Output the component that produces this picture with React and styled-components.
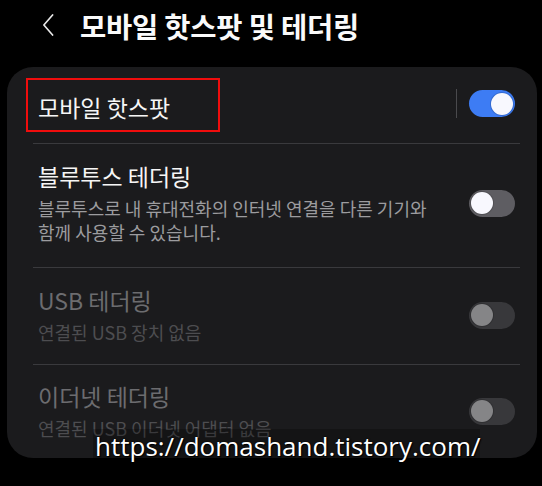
import React from "react";
import styled, { createGlobalStyle } from "styled-components";

const GlobalStyle = createGlobalStyle`
  html, body {
    margin: 0;
    padding: 0;
    background: #000;
  }
  body {
    width: 542px;
    height: 486px;
    overflow: hidden;
    font-family: "Noto Sans CJK KR", "Noto Sans", sans-serif;
  }
`;

const rows = [
  {
    title: "블루투스 테더링",
    desc: "블루투스로 내 휴대전화의 인터넷 연결을 다른 기기와 함께 사용할 수 있습니다.",
    pad: "18px 0 23px",
    state: "off",
  },
  {
    title: "USB 테더링",
    desc: "연결된 USB 장치 없음",
    pad: "18px 0 20px",
    state: "disabled",
  },
  {
    title: "이더넷 테더링",
    desc: "연결된 USB 이더넷 어댑터 없음",
    pad: "17px 0 18px",
    state: "disabled",
  },
];

const App = () => {
  return (
    <Page>
      <GlobalStyle />
      <Header>
        <BackIcon viewBox="0 0 12 24">
          <path d="M11 1 L1.5 12 L11 23" />
        </BackIcon>
        <Title>모바일 핫스팟 및 테더링</Title>
      </Header>
      <Card>
        <Row pad="0" height="76px">
          <TextCol>
            <MainLabel>모바일 핫스팟</MainLabel>
          </TextCol>
          <VDivider />
          <Toggle state="on" lift="3px">
            <Knob state="on" />
          </Toggle>
        </Row>
        <Divider />
        {rows.map((r, i) => (
          <React.Fragment key={r.title}>
            <Row pad={r.pad}>
              <TextCol>
                <RowTitle disabled={r.state === "disabled"}>{r.title}</RowTitle>
                <RowDesc disabled={r.state === "disabled"}>{r.desc}</RowDesc>
              </TextCol>
              <Toggle state={r.state}>
                <Knob state={r.state} />
              </Toggle>
            </Row>
            {i < rows.length - 1 && <Divider />}
          </React.Fragment>
        ))}
        <Highlight />
      </Card>
      <Watermark>https://domashand.tistory.com/</Watermark>
    </Page>
  );
};

const Page = styled.div`
  position: relative;
  width: 542px;
  height: 486px;
  background: #000;
  overflow: hidden;
`;

const Header = styled.div`
  display: flex;
  align-items: center;
  height: 48px;
  padding: 1px 0 1px 42px;
  gap: 26px;
`;

const BackIcon = styled.svg`
  width: 12px;
  height: 22px;
  fill: none;
  stroke: #e8e8e8;
  stroke-width: 1.8;
  stroke-linecap: round;
  stroke-linejoin: round;
`;

const Title = styled.h1`
  margin: 0;
  color: #fafafa;
  font-size: 28.5px;
  font-weight: 700;
  letter-spacing: -0.2px;
`;

const Card = styled.div`
  position: relative;
  margin: 17px 5px 0 7px;
  height: 391px;
  background: #1b1b1d;
  border-radius: 26px;
  overflow: hidden;
`;

const Row = styled.div`
  display: flex;
  align-items: center;
  height: ${({ height }) => height || "auto"};
  padding: ${({ pad }) => pad};
  padding-left: 31px;
  padding-right: 22px;
`;

const TextCol = styled.div`
  flex: 1;
  padding-right: 14px;
  word-break: keep-all;
`;

const MainLabel = styled.div`
  color: #f6f6f6;
  font-size: 23px;
  line-height: 28px;
  margin-top: 4px;
`;

const RowTitle = styled.div`
  color: ${({ disabled }) => (disabled ? "#6c6c6f" : "#f6f6f6")};
  font-size: 23px;
  line-height: 28px;
`;

const RowDesc = styled.div`
  color: ${({ disabled }) => (disabled ? "#4d4d50" : "#9c9c9f")};
  font-size: 18px;
  line-height: 24px;
  margin-top: 6px;
`;

const VDivider = styled.div`
  width: 1px;
  height: 29px;
  background: #4a4a4d;
  margin-right: 12px;
  margin-bottom: 3px;
`;

const trackColors = {
  on: "#3d7cf4",
  off: "#5e5d62",
  disabled: "#38383b",
};

const Toggle = styled.div`
  display: flex;
  flex-shrink: 0;
  align-items: center;
  justify-content: ${({ state }) => (state === "on" ? "flex-end" : "flex-start")};
  width: 46px;
  height: 27px;
  box-sizing: border-box;
  padding: 0 2px;
  border-radius: 14px;
  background: ${({ state }) => trackColors[state]};
  margin-bottom: ${({ lift }) => lift || "0"};
`;

const Knob = styled.div`
  width: 22px;
  height: 22px;
  border-radius: 50%;
  background: ${({ state }) => (state === "disabled" ? "#858587" : "#f8f8fe")};
  box-shadow: 0 0 0 1px rgba(0, 0, 0, 0.15);
`;

const Divider = styled.div`
  height: 1px;
  margin: 0 17px 0 26px;
  background: #3a3a3d;
`;

const Highlight = styled.div`
  position: absolute;
  left: 19px;
  top: 11px;
  width: 194px;
  height: 54px;
  box-sizing: border-box;
  border: 2px solid #f00d0d;
  pointer-events: none;
`;

const Watermark = styled.div`
  position: absolute;
  left: 93px;
  top: 429px;
  width: 387px;
  height: 40px;
  padding-left: 2px;
  box-sizing: border-box;
  background: rgba(0, 0, 0, 0.25);
  color: #fff;
  font-family: "Open Sans", "Noto Sans", sans-serif;
  font-size: 26px;
  line-height: 34px;
  white-space: nowrap;
  text-shadow: 0 0 2px #000, 1px 1px 1px #000;
`;

export default App;
